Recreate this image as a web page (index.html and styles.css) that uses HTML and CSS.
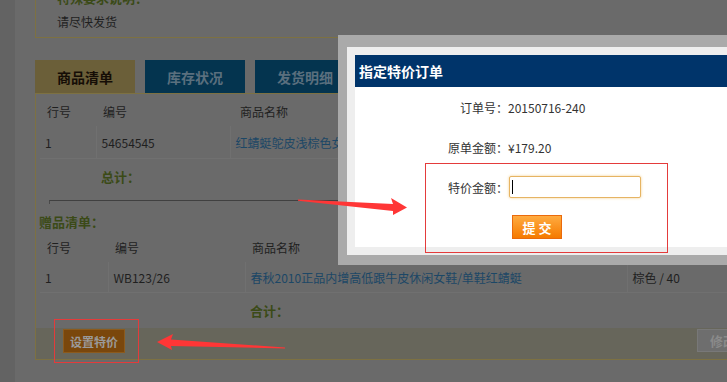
FILE: index.html
```html
<!DOCTYPE html>
<html>
<head>
  <title>订单详情 - 指定特价订单</title>
  <link rel="stylesheet" href="styles.css">
</head>
<body>
  <div class="page">
    <div class="side"></div>
    <div class="main">
      <div class="note">
        <div class="note-title">特殊要求说明：</div>
        <div class="note-text">请尽快发货</div>
      </div>

      <div class="tabs">
        <span class="tab active">商品清单</span>
        <span class="tab">库存状况</span>
        <span class="tab">发货明细</span>
        <span class="tab">物流跟踪</span>
      </div>

      <div class="panel">
        <table class="list goods">
          <colgroup><col class="c-no"><col class="c-code"><col></colgroup>
          <tr class="head"><th>行号</th><th>编号</th><th class="th-name">商品名称</th></tr>
          <tr class="row"><td>1</td><td>54654545</td><td><a href="#">红蜻蜓鸵皮浅棕色女士单鞋</a></td></tr>
          <tr class="sum"><td></td><td class="sum-label">总计：</td><td></td></tr>
        </table>

        <div class="split"></div>
        <div class="gift-title">赠品清单：</div>

        <table class="list gift">
          <colgroup><col class="c-no"><col class="c-code"><col class="c-name"><col></colgroup>
          <tr class="head"><th>行号</th><th>编号</th><th class="th-name">商品名称</th><th></th></tr>
          <tr class="row"><td>1</td><td>WB123/26</td><td><a href="#">春秋2010正品内增高低跟牛皮休闲女鞋/单鞋红蜻蜓</a></td><td>棕色 / 40</td></tr>
          <tr class="sum"><td></td><td></td><td class="sum-label">合计：</td><td></td></tr>
        </table>

        <div class="panel-foot">
          <button class="btn-special">设置特价</button>
          <button class="btn-edit">修改</button>
        </div>
      </div>
    </div>
  </div>

  <div class="dialog">
    <div class="dialog-head">指定特价订单</div>
    <div class="dialog-body">
      <div class="field"><span class="field-label">订单号：</span><span>20150716-240</span></div>
      <div class="field"><span class="field-label">原单金额：</span><span>¥179.20</span></div>
      <div class="field">
        <span class="field-label">特价金额：</span>
        <span class="price-input"><input type="text" name="price"><i class="caret"></i></span>
      </div>
      <div class="actions"><button class="btn-submit">提 交</button></div>
    </div>
  </div>

  <svg class="marks" width="727" height="382" viewBox="0 0 727 382">
    <rect x="425.5" y="163.5" width="242" height="89" fill="none" stroke="#e43b3b" stroke-width="1"/>
    <rect x="54.5" y="319.5" width="84" height="43" fill="none" stroke="#e43b3b" stroke-width="1"/>
    <polygon points="298,199.5 393,204 391,198 407,207.5 393,215 393,211 298,200.8" fill="#ff3636"/>
    <polygon points="157,342 173,334 171,339.5 285,347.4 285,348.4 171,346 172,350" fill="#ff3636"/>
  </svg>
</body>
</html>
```

FILE: styles.css
```css
/* page under the dialog (dimmed) */
body {
  margin: 0;
  width: 727px;
  height: 382px;
  overflow: hidden;
  position: relative;
  background-color: #6a6a6a;
  font-family: "Noto Sans CJK SC", sans-serif;
  font-size: 12px;
  color: #1f1f1f;
}

.page {
  display: flex;
  height: 382px;
}

.side {
  width: 15px;
  flex: none;
  background-color: #636363;
}

.main {
  width: 725px;
  flex: none;
  margin-left: 20px;
}

.note {
  margin-top: -14px;
  border: 1px solid #7d7142;
  border-top: 0;
  padding: 0 0 3px 21px;
}

.note-title {
  line-height: 24px;
  font-size: 13px;
  font-weight: bold;
  color: #3b4a17;
}

.note-text {
  line-height: 24px;
}

.tabs {
  display: flex;
  gap: 10px;
  margin-top: 22px;
  height: 33px;
}

.tab {
  width: 100px;
  display: flex;
  align-items: center;
  justify-content: center;
  font-size: 14px;
  font-weight: bold;
  background-color: #04344f;
  color: #5a6f7e;
}

.tab.active {
  background-color: #6b5f39;
  color: #150d06;
}

.panel {
  border: 1px solid #7d7142;
  padding: 3px 0 0 4px;
}

.list {
  border-collapse: collapse;
  table-layout: fixed;
  width: 715px;
}

.list th {
  font-weight: normal;
  text-align: left;
  padding: 0 0 0 7px;
}

.list td {
  padding: 0 0 0 5px;
}

.list a {
  color: #1c4766;
  text-decoration: none;
}

.list .row td {
  border: 1px solid #707070;
  border-top: 0;
}

.list .row td:first-child {
  border-left: 0;
}

.goods .c-no { width: 56px; }
.goods .c-code { width: 134px; }
.goods .head th { height: 29px; }
.goods .row td { height: 32px; }
.goods .sum td { height: 34px; }
.goods .th-name { padding-left: 10px; }

.gift .c-no { width: 68px; }
.gift .c-code { width: 137px; }
.gift .c-name { width: 382px; }
.gift .head th { height: 24px; padding-bottom: 3px; }
.gift .row td { height: 30px; }
.gift .sum td { height: 35px; }
.gift .th-name { padding-left: 7px; }

.sum-label {
  font-size: 13px;
  font-weight: bold;
  color: #3b4a17;
}

.split {
  margin: 7px 0 0 9px;
  width: 620px;
  height: 3px;
  border-top: 1px solid #404040;
  border-left: 1px solid #4a4a4a;
}

.gift-title {
  margin: 5px 0 0 -1px;
  line-height: 26px;
  font-size: 13px;
  font-weight: bold;
  color: #3b4a17;
}

.panel-foot {
  display: flex;
  justify-content: space-between;
  align-items: flex-start;
  height: 30px;
  margin-left: -4px;
  padding: 1px 0 0 27px;
  background-color: #67665b;
}

.btn-special {
  width: 62px;
  height: 24px;
  padding: 0;
  border: 1px solid #8c5a1c;
  background-color: #7a470c;
  color: #9a9a9a;
  font-family: inherit;
  font-size: 12px;
  font-weight: bold;
}

.btn-edit {
  width: 52px;
  height: 23px;
  margin-right: 10px;
  padding: 0;
  border: 1px solid #787878;
  background-color: #6e6e6e;
  color: #8a8a8a;
  font-family: inherit;
  font-size: 13px;
  font-weight: bold;
}

/* dialog */
.dialog {
  position: absolute;
  left: 338px;
  top: 35px;
  width: 440px;
  border: 9px solid #aaaaaa;
  border-top-width: 12px;
  border-bottom-width: 10px;
  padding: 8px;
  background-color: #eeeeee;
}

.dialog-head {
  height: 32px;
  line-height: 32px;
  padding-left: 4px;
  background-color: #00346a;
  color: #fff;
  font-size: 14px;
  font-weight: bold;
}

.dialog-body {
  height: 160px;
  background-color: #fff;
  color: #333;
}

.field {
  display: flex;
  align-items: center;
  height: 40px;
}

.field-label {
  width: 153px;
  text-align: right;
}

.price-input {
  position: relative;
  margin-left: 1px;
  display: flex;
}

.price-input input {
  width: 132px;
  height: 22px;
  box-sizing: border-box;
  border: 1px solid #e6b463;
  border-radius: 2px;
  box-shadow: 0 0 3px #f4cf8e;
  outline: none;
}

.caret {
  position: absolute;
  left: 3px;
  top: 4px;
  width: 1px;
  height: 14px;
  background-color: #000;
}

.actions {
  padding: 8px 0 0 157px;
}

.btn-submit {
  width: 50px;
  height: 24px;
  padding: 0;
  border: 1px solid #ea6a0c;
  background: linear-gradient(#ffab40, #f57a00);
  color: #fff;
  font-family: inherit;
  font-size: 13px;
  font-weight: bold;
}

.marks {
  position: absolute;
  left: 0;
  top: 0;
  pointer-events: none;
}
```
